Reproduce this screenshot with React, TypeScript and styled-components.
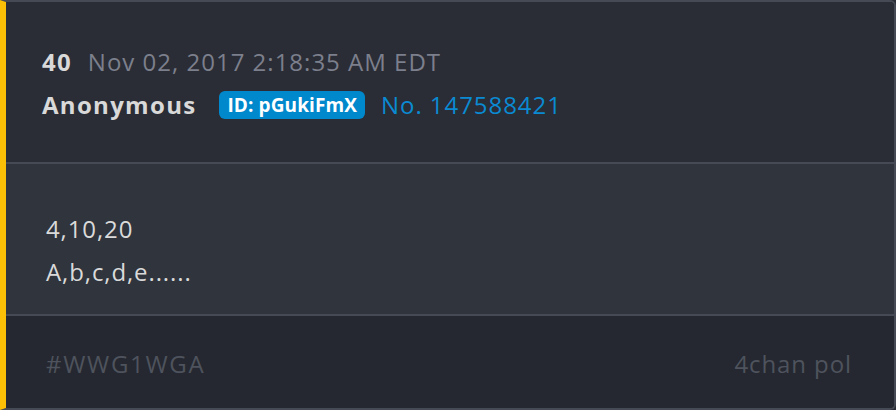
import React from "react";
import styled, { createGlobalStyle } from "styled-components";

const Global = createGlobalStyle`
  html, body { margin: 0; padding: 0; background: #2a2d35; }
  body { font-family: "Open Sans", "Noto Sans", sans-serif; }
`;

const Card = styled.div`
  box-sizing: border-box;
  width: 896px;
  height: 410px;
  display: flex;
  flex-direction: column;
  border: 2px solid #454a54;
  border-left: 6px solid #fcc006;
  border-radius: 0 6px 6px 0;
  overflow: hidden;
`;

const Header = styled.div`
  background: #2a2d35;
  height: 162px;
  flex: none;
  box-sizing: border-box;
  padding: 38px 0 0 36px;
  border-bottom: 2px solid #454a54;
`;

const Row = styled.div`
  display: flex;
  align-items: center;
  height: 43px;
  line-height: 43px;
`;

const Num = styled.span`
  font-weight: 700;
  font-size: 24px;
  letter-spacing: 1.2px;
  color: #d9d9d9;
  margin-right: 16px;
`;

const DateText = styled.span`
  font-size: 24px;
  letter-spacing: 1px;
  color: #7c7f8c;
`;

const Name = styled.span`
  font-weight: 700;
  font-size: 24px;
  letter-spacing: 1.3px;
  color: #d9d9d9;
  margin-right: 23px;
`;

const Badge = styled.span`
  background: #0088cc;
  color: #fff;
  font-weight: 700;
  font-size: 19px;
  letter-spacing: 0.1px;
  border-radius: 6px;
  padding: 0 8px;
  height: 28px;
  line-height: 28px;
  margin-right: 16px;
`;

const PostNo = styled.span`
  font-size: 24px;
  letter-spacing: 0.95px;
  color: #0a8ad2;
`;

const Body = styled.div`
  background: #2f343d;
  height: 152px;
  flex: none;
  box-sizing: border-box;
  padding: 43px 0 0 40px;
  border-bottom: 2px solid #454a54;
  color: #dadada;
  font-size: 24px;
  letter-spacing: 0.9px;
  line-height: 43px;
`;

const Line = styled.div``;

const Footer = styled.div`
  flex: 1;
  background: #252830;
  display: flex;
  justify-content: space-between;
  align-items: center;
  padding: 3px 42px 0 40px;
  color: #4e535d;
  font-size: 24px;
  letter-spacing: 0.9px;
`;

const Tag = styled.span`
  letter-spacing: 1.7px;
`;

const Source = styled.span``;

export default function App() {
  return (
    <>
      <Global />
      <Card>
        <Header>
          <Row>
            <Num>40</Num>
            <DateText>Nov 02, 2017 2:18:35 AM EDT</DateText>
          </Row>
          <Row>
            <Name>Anonymous</Name>
            <Badge>ID: pGukiFmX</Badge>
            <PostNo>No. 147588421</PostNo>
          </Row>
        </Header>
        <Body>
          <Line>4,10,20</Line>
          <Line>A,b,c,d,e......</Line>
        </Body>
        <Footer>
          <Tag>#WWG1WGA</Tag>
          <Source>4chan pol</Source>
        </Footer>
      </Card>
    </>
  );
}
